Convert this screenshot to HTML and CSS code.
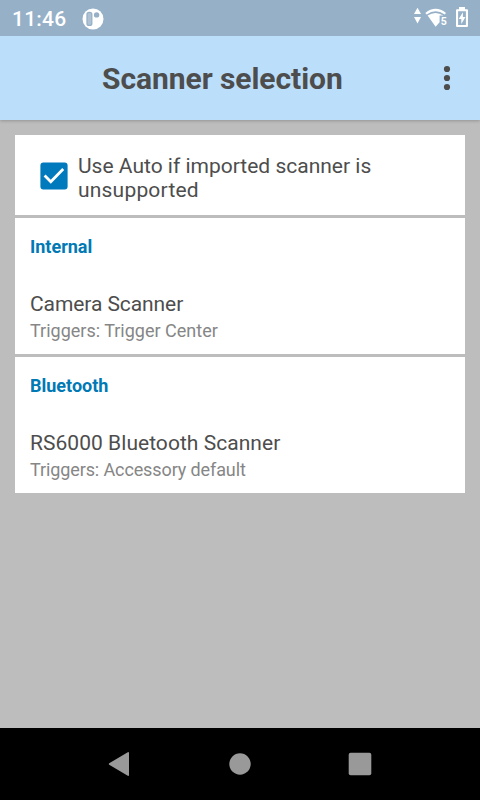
FILE: index.html
```html
<!DOCTYPE html>
<html lang="en">
<head>
<meta charset="utf-8">
<title>Scanner selection</title>
<link rel="stylesheet" href="styles.css">
</head>
<body>
<div class="screen">
  <div class="status">
    <span class="clock">11:46</span>
    <svg class="app" width="22" height="22" viewBox="0 0 22 22"><circle cx="11" cy="11" r="10.5" fill="#fff"/><rect x="5" y="4.400" width="4.800" height="13" rx="2" fill="#aec2d4" stroke="#96b0c8" stroke-width="1.300"/><circle cx="14.600" cy="6.900" r="2.700" fill="#96b0c8"/></svg>
    <svg class="indicators" width="60" height="24" viewBox="0 0 60 24">
      <g fill="#fff">
        <path d="M3.500 1.800 7 8H0zM3.500 17.500 7 11H0z"/>
        <path d="M11.300 7Q21.500-1.400 32 7L30.700 8.600Q21.500 1.800 12.700 8.600z"/>
        <path d="M13.600 9.600Q21.500 4.200 29.400 9.600H25.600V16.200L21.600 20.800z"/>
        <path fill-rule="evenodd" d="M45 1h6v2.200h2q1 0 1 1V20q0 1-1 1H43q-1 0-1-1V4.200q0-1 1-1h2zM44.100 5.300v13.600h7.800V5.300z"/>
        <path d="M48.900 6.300 44.700 13h2.600v5l4.200-7h-2.600z"/>
      </g>
      <text class="band" x="26.700" y="18.700">5</text>
    </svg>
  </div>
  <header class="bar">
    <h1>Scanner selection</h1>
    <svg class="menu" width="8" height="28" viewBox="0 0 8 28" fill="#4d4d4d"><circle cx="4" cy="5" r="3.100"/><circle cx="4" cy="14" r="3.100"/><circle cx="4" cy="23" r="3.100"/></svg>
  </header>
  <main>
    <section class="card option">
      <svg class="check" width="28" height="28" viewBox="0 0 28 28"><rect x=".4" y=".4" width="27.200" height="27.200" rx="3" fill="#0079bd"/><path d="m4.600 13.500 6.200 6.200L23.200 7" fill="none" stroke="#fff" stroke-width="2.800"/></svg>
      <p class="label"><span class="line">Use Auto if imported scanner is</span><span class="line second">unsupported</span></p>
    </section>
    <section class="card group">
      <h2>Internal</h2>
      <p class="name camera">Camera Scanner</p>
      <p class="detail">Triggers: Trigger Center</p>
    </section>
    <section class="card group">
      <h2>Bluetooth</h2>
      <p class="name rs">RS6000 Bluetooth Scanner</p>
      <p class="detail accessory">Triggers: Accessory default</p>
    </section>
  </main>
  <nav class="nav">
    <svg width="24" height="26" viewBox="0 0 24 26"><path d="M1.200 12.200 19.800 1.200Q21 .8 21 2v22q0 1.200-1.200.8L1.200 13.800Q.4 13 1.200 12.200z" fill="#999"/></svg>
    <svg width="24" height="26" viewBox="0 0 24 26"><circle cx="12" cy="13" r="10.700" fill="#999"/></svg>
    <svg width="24" height="26" viewBox="0 0 24 26"><rect x=".7" y="1.700" width="22.600" height="22.600" rx="2" fill="#999"/></svg>
  </nav>
</div>
</body>
</html>
```
FILE: styles.css
```css
* { box-sizing: border-box; }
body, h1, h2, p { margin: 0; }
body {
  font-family: Roboto, sans-serif;
  background: #bdbdbd;
  color: #4d4d4d;
}
.screen {
  display: flex;
  flex-direction: column;
  width: 480px;
  height: 800px;
  overflow: hidden;
}
svg { display: block; flex: none; }
.status {
  display: flex;
  align-items: center;
  height: 36px;
  padding: 0 10px 0 12px;
  background: #96b0c8;
}
.clock {
  width: 70px;
  font-size: 21px;
  font-weight: 500;
  line-height: 36px;
  letter-spacing: .2px;
  color: #fff;
  padding-top: 2px;
}
.app { margin-top: 1px; }
.indicators { margin-left: auto; margin-right: -4px; }
.band {
  font: 700 10.5px Roboto, sans-serif;
  fill: #fff;
  stroke: #96b0c8;
  stroke-width: 2px;
  paint-order: stroke;
}
.bar {
  display: flex;
  align-items: center;
  height: 84px;
  padding: 0 29px 0 102px;
  background: #bbdefb;
  box-shadow: 0 1px 3px rgba(0, 0, 0, .22);
  clip-path: inset(0 0 -6px 0);
}
h1 {
  font-size: 30px;
  font-weight: 700;
  line-height: 36px;
  letter-spacing: -.06px;
  white-space: nowrap;
  padding-top: 2px;
}
.menu { margin-left: auto; }
main {
  display: flex;
  flex-direction: column;
  flex: 1;
  gap: 3px;
  padding: 15px 15px 0;
}
.card { background: #fff; }
.option {
  display: flex;
  align-items: center;
  height: 80px;
  padding: 2px 0 0 25px;
}
.label {
  margin-left: 10px;
  padding-top: 4px;
  font-size: 21px;
  line-height: 24px;
}
.line { display: block; white-space: nowrap; }
.second { letter-spacing: .2px; }
.group { height: 136px; padding: 18px 15px 0; }
h2 {
  font-size: 18px;
  font-weight: 700;
  line-height: 22px;
  color: #0079b5;
}
.name {
  margin-top: 33px;
  font-size: 21px;
  line-height: 26px;
}
.camera { letter-spacing: -.08px; }
.rs { letter-spacing: .04px; }
.detail {
  margin-top: 3px;
  font-size: 18px;
  line-height: 22px;
  color: #868686;
}
.accessory { letter-spacing: -.11px; }
.nav {
  display: flex;
  align-items: center;
  justify-content: center;
  gap: 96px;
  height: 72px;
  background: #000;
}
```
